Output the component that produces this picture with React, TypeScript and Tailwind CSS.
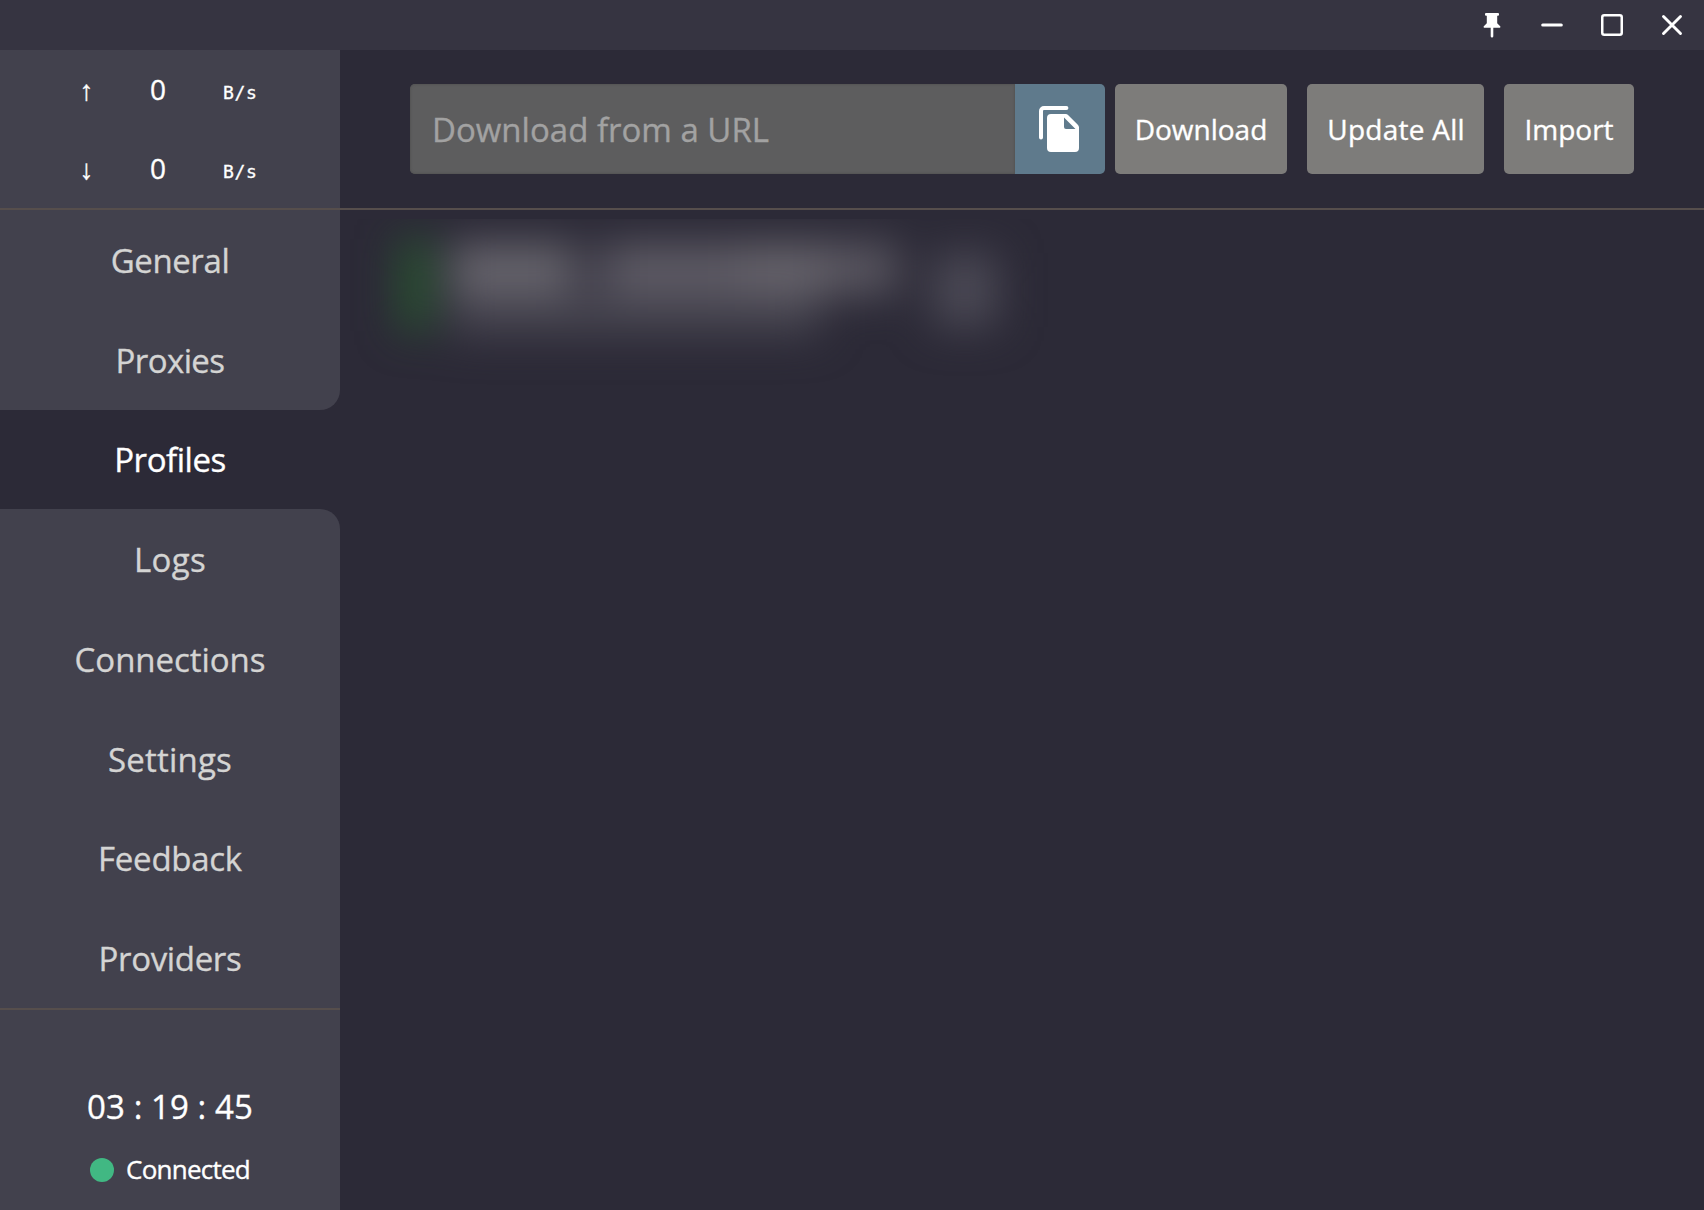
import React from "react";

const navItems = [
  { label: "General", tracking: "tracking-[-0.4px]", shape: "" },
  { label: "Proxies", tracking: "tracking-[-0.6px]", shape: "rounded-br-[20px]" },
  { label: "Profiles", tracking: "tracking-[-0.45px]", shape: "", active: true },
  { label: "Logs", tracking: "tracking-[0.3px]", shape: "rounded-tr-[20px]" },
  { label: "Connections", tracking: "tracking-[-0.05px]", shape: "" },
  { label: "Settings", tracking: "tracking-[0.2px]", shape: "" },
  { label: "Feedback", tracking: "tracking-[-0.27px]", shape: "" },
  { label: "Providers", tracking: "tracking-[-0.35px]", shape: "" },
];

function TitleBar() {
  return (
    <header className="flex h-[50px] shrink-0 items-center justify-end gap-[30px] bg-[#363441] pr-[17px]">
      <svg width="30" height="30" viewBox="0 0 30 30" fill="#fff">
        <path d="M9 3h12a1 1 0 0 1 1 1v.8a1 1 0 0 1-1 1h-.8v7.400l3 3a1 1 0 0 1-.7 1.600h-6.200v8.400a1.200 1.200 0 0 1-2.600 0v-8.400H7.500a1 1 0 0 1-.7-1.600l3-3V5.800H9a1 1 0 0 1-1-1V4a1 1 0 0 1 1-1z" />
      </svg>
      <svg width="30" height="30" viewBox="0 0 30 30" stroke="#fff" strokeWidth="3" strokeLinecap="round">
        <path d="M5.700 15h18.600" />
      </svg>
      <svg width="30" height="30" viewBox="0 0 30 30" fill="none" stroke="#fff" strokeWidth="2.500">
        <rect x="5.250" y="5.250" width="19.500" height="19.500" rx="2" />
      </svg>
      <svg width="30" height="30" viewBox="0 0 30 30" fill="none" stroke="#fff" strokeWidth="2.900" strokeLinecap="round">
        <path d="M6.500 6.500l17 17M23.500 6.500l-17 17" />
      </svg>
    </header>
  );
}

function TrafficRow({ arrow }: { arrow: string }) {
  return (
    <div className="flex h-[79px] items-center pl-[78px] text-white">
      <span className="mt-[7px] w-[17px] text-center font-['Liberation_Mono',monospace] text-[28px] leading-none">{arrow}</span>
      <span className="-mt-[2px] ml-[54px] w-[18px] text-center text-[28px] leading-none">0</span>
      <span className="ml-[56px] mt-[6px] font-['DejaVu_Sans_Mono',monospace] text-[18px] leading-none tracking-[0.7px]">B/s</span>
    </div>
  );
}

function Sidebar() {
  return (
    <aside className="flex w-[340px] shrink-0 flex-col">
      <div className="h-[160px] border-b-2 border-[#564e4c] bg-[#42414d]">
        <TrafficRow arrow="↑" />
        <TrafficRow arrow="↓" />
      </div>
      <nav className="grid h-[798px] grid-rows-8 text-[33px] leading-none">
        {navItems.map((n) => (
          <a
            key={n.label}
            className={`flex items-center justify-center pt-[1px] ${n.tracking} ${n.shape} ${
              n.active ? "text-white" : "bg-[#42414d] text-[#d4d4d3]"
            }`}
          >
            {n.label}
          </a>
        ))}
      </nav>
      <footer className="flex flex-1 flex-col border-t-2 border-[#564e4c] bg-[#42414d] pt-[67px] text-white">
        <div className="text-center text-[33px] leading-[60px] tracking-[0.08px]">03 : 19 : 45</div>
        <div className="mt-[21px] flex h-6 items-center gap-[12px] pl-[90px]">
          <span className="size-6 rounded-full bg-[#41b883]" />
          <span className="-mt-[2px] text-[26px] leading-none tracking-[-0.75px]">Connected</span>
        </div>
      </footer>
    </aside>
  );
}

function Toolbar() {
  return (
    <div className="flex h-[160px] items-center border-b-2 border-[#564e4c] pl-[70px] text-[28px] text-white">
      <div className="flex h-[90px] w-[605px] items-center rounded-l-[5px] bg-[#5d5d5e] pl-[22px] pt-[2px] text-[33px] text-[#a2a2a2] shadow-[inset_0_0_2px_1px_#545454]">
        Download from a URL
      </div>
      <button className="flex size-[90px] items-center justify-center rounded-r-[5px] bg-[#5f7a8c]">
        <svg width="40" height="46" viewBox="0 0 40 46" className="mr-[2px]">
          <path d="M27.400 2H5a3 3 0 0 0-3 3v26.500" fill="none" stroke="#fff" strokeWidth="4" strokeLinecap="round" />
          <path
            fillRule="evenodd"
            fill="#fff"
            d="M12 8h14.500a4 4 0 0 1 2.800 1.200l9.500 9.500a4 4 0 0 1 1.200 2.800V42a4 4 0 0 1-4 4H12a4 4 0 0 1-4-4V12a4 4 0 0 1 4-4zM25 11.500V21a2 2 0 0 0 2 2h9.500z"
          />
        </svg>
      </button>
      <button className="ml-[10px] h-[90px] w-[172px] rounded-[5px] bg-[#7d7c7a]">Download</button>
      <button className="ml-5 h-[90px] w-[177px] rounded-[5px] bg-[#7d7c7a] pl-[1px] tracking-[0.25px]">Update All</button>
      <button className="ml-5 h-[90px] w-[130px] rounded-[5px] bg-[#7d7c7a]">Import</button>
    </div>
  );
}

/* Profile entry, hidden behind a privacy blur. */
function BlurredProfile() {
  return (
    <div className="mt-[9px] h-[180px] overflow-hidden">
      <div className="flex pl-[60px] pt-[20px] blur-[21px]">
        <div className="h-[92px] w-[30px] bg-[#28562f]" />
        <div className="ml-[20px] mt-[4px] w-[448px]">
          <div className="flex h-[52px]">
            <div className="w-[120px] bg-[#66646c]" />
            <div className="w-[38px] bg-[#403e4a]" />
            <div className="w-[130px] bg-[#5e5b65]" />
            <div className="w-[90px] bg-[#66636b]" />
            <div className="flex-1 bg-[#595660]" />
          </div>
          <div className="h-[40px] w-[370px] bg-[#46444f]" />
        </div>
        <div className="ml-[34px] mt-[14px] h-[74px] w-[66px] bg-[#4a4854]" />
      </div>
    </div>
  );
}

export default function App() {
  return (
    <div className="flex h-[1210px] w-[1704px] flex-col overflow-hidden bg-[#2c2a37] font-['Open_Sans',sans-serif] [-webkit-text-stroke:0.35px]">
      <TitleBar />
      <div className="flex flex-1">
        <Sidebar />
        <main className="flex-1">
          <Toolbar />
          <BlurredProfile />
        </main>
      </div>
    </div>
  );
}
